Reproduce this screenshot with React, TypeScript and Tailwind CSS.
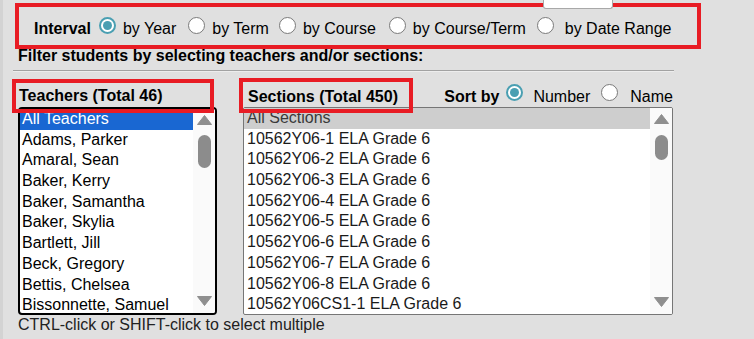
import React from "react";

const teachers = [
  "All Teachers",
  "Adams, Parker",
  "Amaral, Sean",
  "Baker, Kerry",
  "Baker, Samantha",
  "Baker, Skylia",
  "Bartlett, Jill",
  "Beck, Gregory",
  "Bettis, Chelsea",
  "Bissonnette, Samuel",
];

const sections = [
  "All Sections",
  "10562Y06-1 ELA Grade 6",
  "10562Y06-2 ELA Grade 6",
  "10562Y06-3 ELA Grade 6",
  "10562Y06-4 ELA Grade 6",
  "10562Y06-5 ELA Grade 6",
  "10562Y06-6 ELA Grade 6",
  "10562Y06-7 ELA Grade 6",
  "10562Y06-8 ELA Grade 6",
  "10562Y06CS1-1 ELA Grade 6",
];

function Radio({ checked, className }: { checked?: boolean; className?: string }) {
  if (checked) {
    return (
      <span className={"flex w-[17px] h-[17px] shrink-0 items-center justify-center rounded-full border-2 border-[#4a9fb2] bg-white " + (className || "")}>
        <span className="w-[9px] h-[9px] rounded-full bg-[#4a9fb2]" />
      </span>
    );
  }
  return <span className={"block w-[17px] h-[17px] shrink-0 rounded-full border-[1.5px] border-[#7a7a7a] bg-white " + (className || "")} />;
}

function Arrow({ up }: { up?: boolean }) {
  return (
    <div className="flex h-[22px] items-center justify-center">
      <svg width="15" height="10" viewBox="0 0 15 10">
        {up ? (
          <polygon points="7.5,0.5 14.5,9.5 0.5,9.5" fill="#8f8f8f" strokeLinejoin="round" stroke="#8f8f8f" strokeWidth="1" />
        ) : (
          <polygon points="0.5,0.5 14.5,0.5 7.5,9.5" fill="#8f8f8f" strokeLinejoin="round" stroke="#8f8f8f" strokeWidth="1" />
        )}
      </svg>
    </div>
  );
}

function Scrollbar({ thumb, thumbTop }: { thumb: number; thumbTop: string }) {
  return (
    <div className="flex w-[22px] flex-col items-center bg-[#fafafa]">
      <Arrow up />
      <div className={"w-[13px] rounded-full bg-[#8c8c8c] " + thumbTop} style={{ height: thumb }} />
      <div className="mt-auto mb-[1px]">
        <Arrow />
      </div>
    </div>
  );
}

export default function App() {
  return (
    <div
      className="relative w-[754px] h-[339px] overflow-hidden bg-[#e0e0e0] text-[16px] text-black shadow-[inset_3px_0_0_#d3d3d3]"
      style={{ fontFamily: '"Liberation Sans", Arial, sans-serif' }}
    >
      {/* interval choices */}
      <div className="flex h-[18px] items-center pl-[34px] mt-[20px] leading-[18px] whitespace-nowrap">
        <span className="font-bold">Interval</span>
        <Radio checked className="ml-[8px] mb-2" />
        <span className="ml-[7px]">by Year</span>
        <Radio className="ml-[12px] mb-2" />
        <span className="ml-[7px]">by Term</span>
        <Radio className="ml-[10px] mb-2" />
        <span className="ml-[7px]">by Course</span>
        <Radio className="ml-[13px] mb-2" />
        <span className="ml-[7px]">by Course/Term</span>
        <Radio className="ml-[11px] mb-2" />
        <span className="ml-[11px]">by Date Range</span>
      </div>

      <div className="mt-[9px] pl-[18px] font-bold leading-[18px] whitespace-nowrap">
        Filter students by selecting teachers and/or sections:
      </div>

      <div className="ml-[13px] mt-[5px] w-[661px] border-t border-b border-t-[#a2a2a2] border-b-[#ededed]" />

      <div className="flex pl-[18px] mt-[15px]">
        {/* teachers */}
        <div className="flex w-[199px] flex-col">
          <div className="pl-[1px] font-bold leading-[18px] h-[20px] whitespace-nowrap">Teachers (Total 46)</div>
          <div className="flex h-[208px] overflow-hidden rounded-[4px] border-2 border-black bg-white">
            <div className="flex-1 leading-[20.7px]">
              {teachers.map((t, i) => (
                <div key={t} className={"h-[20.7px] pl-[2px] whitespace-nowrap " + (i === 0 ? "bg-[#1967d2] text-white" : "text-black")}>
                  {t}
                </div>
              ))}
            </div>
            <Scrollbar thumb={33} thumbTop="mt-[4px]" />
          </div>
        </div>

        {/* sections */}
        <div className="ml-[26px] flex w-[430px] flex-col">
          <div className="flex h-[20px] items-center leading-[18px] whitespace-nowrap">
            <span className="pl-[5px] font-bold">Sections (Total 450)</span>
            <div className="ml-auto flex h-[18px] items-center">
              <span className="font-bold">Sort by</span>
              <Radio checked className="ml-[7px] mb-[10px]" />
              <span className="ml-[10px]">Number</span>
              <Radio className="ml-[11px] mb-[10px]" />
              <span className="ml-[12px]">Name</span>
            </div>
          </div>
          <div className="flex h-[208px] overflow-hidden rounded-[2px] border border-[#767676] bg-white">
            <div className="flex-1 leading-[20.7px]">
              {sections.map((s, i) => (
                <div key={s} className={"h-[20.7px] pl-[3px] whitespace-nowrap " + (i === 0 ? "bg-[#cecece] text-[#3a3a3a]" : "text-[#1a1a1a]")}>
                  {s}
                </div>
              ))}
            </div>
            <Scrollbar thumb={25} thumbTop="mt-[5px]" />
          </div>
        </div>
      </div>

      <div className="pl-[18px] leading-[18px] text-[#222] mt-[1px]">CTRL-click or SHIFT-click to select multiple</div>

      {/* peeking input above the interval row */}
      <div className="absolute left-[543px] top-0 h-[9px] w-[70px] rounded-b-[3px] border border-t-0 border-[#a8a8a8] bg-white z-10" />

      {/* red annotation boxes */}
      <div className="pointer-events-none absolute left-[15px] top-[3px] w-[686px] h-[46px] border-[4px] border-[#e81c24]" />
      <div className="pointer-events-none absolute left-[12px] top-[79px] w-[202px] h-[34px] border-[4px] border-[#e81c24]" />
      <div className="pointer-events-none absolute left-[239px] top-[78px] w-[174px] h-[35px] border-[4px] border-[#e81c24]" />
    </div>
  );
}
